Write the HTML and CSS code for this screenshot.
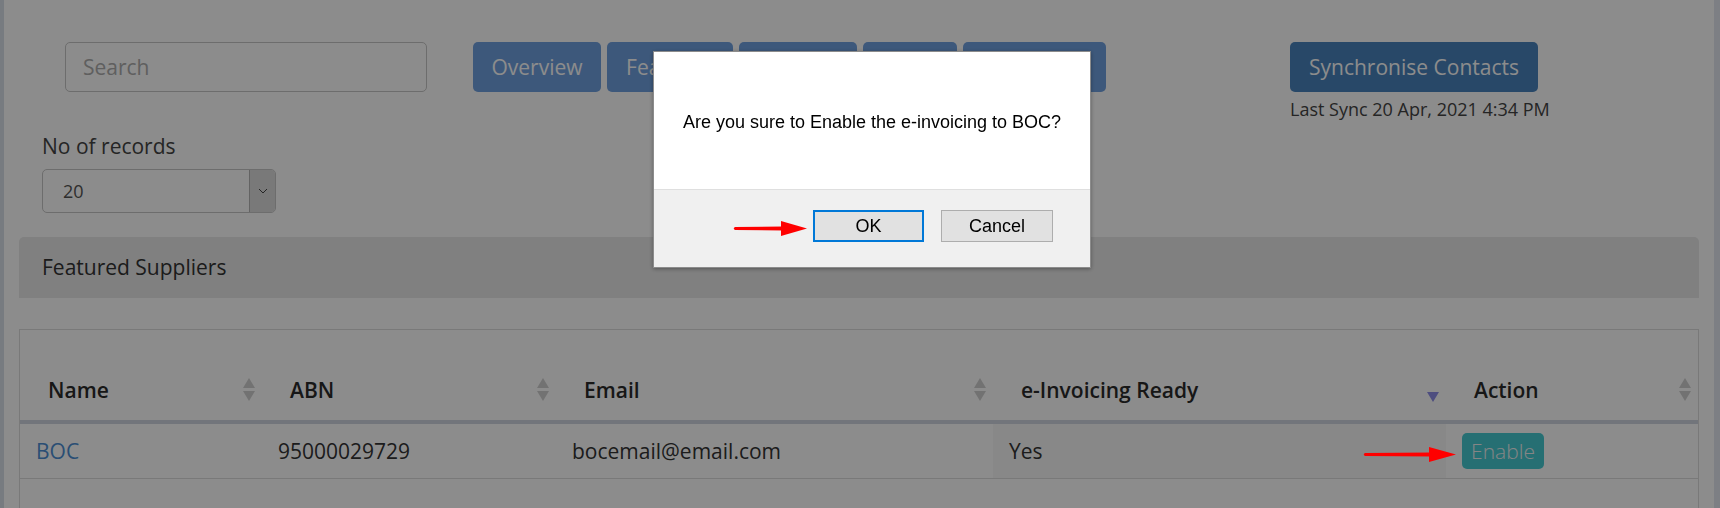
FILE: index.html
```html
<!DOCTYPE html>
<html lang="en">
<head>
<meta charset="utf-8">
<title>Suppliers</title>
<link rel="stylesheet" href="styles.css">
</head>
<body>
<div class="app">
  <div class="edge-left"></div>
  <main class="main">
    <div class="toolbar">
      <input class="search" type="text" placeholder="Search">
      <div class="tabs">
        <button class="tab tab-1">Overview</button>
        <button class="tab tab-2">Featured</button>
        <button class="tab tab-3">Connected</button>
        <button class="tab tab-4">Others</button>
        <button class="tab tab-5">Pending</button>
      </div>
      <div class="sync">
        <button class="sync-btn">Synchronise Contacts</button>
        <div class="last-sync">Last Sync 20 Apr, 2021 4:34 PM</div>
      </div>
    </div>

    <div class="records">
      <div class="records-label">No of records</div>
      <div class="select">
        <span class="select-value">20</span>
        <span class="select-arrow">
          <svg width="10" height="6" viewBox="0 0 10 6"><polyline points="1,1 5,5 9,1" fill="none" stroke="#444" stroke-width="1"/></svg>
        </span>
      </div>
    </div>

    <div class="panel">Featured Suppliers</div>

    <div class="table-box">
      <table class="grid">
        <colgroup>
          <col class="c1"><col class="c2"><col class="c3"><col class="c4"><col>
        </colgroup>
        <thead>
          <tr>
            <th><div class="th-in"><span>Name</span><svg class="sort" width="12" height="24" viewBox="0 0 12 24"><polygon points="6,0 12,10 0,10" fill="#d0d0d0"/><polygon points="0,13 12,13 6,23" fill="#d0d0d0"/></svg></div></th>
            <th><div class="th-in"><span>ABN</span><svg class="sort" width="12" height="24" viewBox="0 0 12 24"><polygon points="6,0 12,10 0,10" fill="#d0d0d0"/><polygon points="0,13 12,13 6,23" fill="#d0d0d0"/></svg></div></th>
            <th><div class="th-in"><span>Email</span><svg class="sort" width="12" height="24" viewBox="0 0 12 24"><polygon points="6,0 12,10 0,10" fill="#d0d0d0"/><polygon points="0,13 12,13 6,23" fill="#d0d0d0"/></svg></div></th>
            <th><div class="th-in"><span>e-Invoicing Ready</span><svg class="sort" width="12" height="24" viewBox="0 0 12 24"><polygon points="0,14 12,14 6,24" fill="#8f8fe8"/></svg></div></th>
            <th><div class="th-in"><span>Action</span><svg class="sort" width="12" height="24" viewBox="0 0 12 24"><polygon points="6,0 12,10 0,10" fill="#d0d0d0"/><polygon points="0,13 12,13 6,23" fill="#d0d0d0"/></svg></div></th>
          </tr>
        </thead>
        <tbody>
          <tr>
            <td><a class="link" href="#">BOC</a></td>
            <td>95000029729</td>
            <td>bocemail@email.com</td>
            <td class="sorted">Yes</td>
            <td class="action-cell"><span class="enable-btn">Enable</span></td>
          </tr>
        </tbody>
      </table>
    </div>
  </main>
  <div class="edge-right"></div>
</div>

<div class="overlay"></div>

<div class="dialog">
  <div class="dialog-body">Are you sure to Enable the e-invoicing to BOC?</div>
  <div class="dialog-footer">
    <button class="dbtn dbtn-ok">OK</button>
    <button class="dbtn dbtn-cancel">Cancel</button>
  </div>
</div>

<svg class="arrow arrow-ok" width="78" height="20" viewBox="0 0 78 20">
  <path d="M4,8 L52,7.5 L52,11.5 L4,11 Q1.5,9.5 4,8 Z" fill="#f00"/>
  <polygon points="50,2 76,9.5 50,17" fill="#f00"/>
</svg>
<svg class="arrow arrow-enable" width="98" height="20" viewBox="0 0 98 20">
  <path d="M4,8 L70,7.5 L70,11.5 L4,11 Q1.5,9.5 4,8 Z" fill="#f00"/>
  <polygon points="68,2 95,9.5 68,17" fill="#f00"/>
</svg>
</body>
</html>
```

FILE: styles.css
```css
* { box-sizing: border-box; }
html, body { margin: 0; padding: 0; }
body {
  width: 1720px;
  height: 508px;
  overflow: hidden;
  background: #fff;
  color: #333;
  font-family: "Open Sans", "Liberation Sans", sans-serif;
}
.app { display: flex; height: 508px; overflow: hidden; }
.edge-left { flex: none; width: 4px; background: #d9e0ea; }
.edge-right { flex: none; width: 6px; background: #e3e8f0; }
.main { flex: 1; padding: 42px 15px 0 15px; min-width: 0; }

/* toolbar */
.toolbar { display: flex; align-items: flex-start; padding-left: 46px; }
.search {
  width: 362px; height: 50px;
  border: 1px solid #c6c6c6; border-radius: 5px;
  padding: 0 17px;
  font-family: "Open Sans", sans-serif; font-size: 21px; color: #555;
  background: #fff; outline: none;
}
.search::placeholder { color: #adadad; }
.tabs { display: flex; gap: 6px; margin-left: 46px; }
.tab {
  height: 50px; padding: 0; border: 0; border-radius: 5px;
  background: #70a1e0; color: #fff;
  font-family: "Open Sans", sans-serif; font-size: 21px; line-height: 50px;
  text-align: center; white-space: nowrap; overflow: hidden;
}
.tab-1 { width: 128px; }
.tab-2 { width: 126px; }
.tab-3 { width: 118px; }
.tab-4 { width: 94px; }
.tab-5 { width: 143px; }
.sync { display: flex; flex-direction: column; margin-left: 184px; }
.sync-btn {
  width: 248px; height: 50px; padding: 0; border: 0; border-radius: 5px;
  background: #4983be; color: #fff;
  font-family: "Open Sans", sans-serif; font-size: 21px; line-height: 50px;
}
.last-sync { margin-top: 6px; font-size: 18px; line-height: 22px; color: #444; white-space: nowrap; }

/* records */
.records { margin-top: 13px; padding-left: 23px; }
.records-label { font-size: 21px; line-height: 26px; color: #444; }
.select {
  margin-top: 10px; width: 234px; height: 44px;
  border: 1px solid #c6c6c6; border-radius: 5px;
  display: flex; overflow: hidden; background: #fff;
}
.select-value { flex: 1; padding-left: 20px; font-size: 18px; line-height: 42px; color: #555; }
.select-arrow {
  width: 26px; background: #dcdcdc; border-left: 1px solid #b5b5b5;
  display: flex; align-items: center; justify-content: center;
}

/* panel */
.panel {
  margin-top: 24px; height: 61px; padding-left: 23px;
  background: #e9e9e9; border-radius: 5px 5px 0 0;
  font-size: 21px; line-height: 61px; color: #333;
}

/* table */
.table-box {
  margin-top: 31px; height: 179px;
  border: 1px solid #dcdcdc; border-bottom: 0; padding-top: 30px;
}
.grid { width: 100%; table-layout: fixed; border-collapse: separate; border-spacing: 0; }
.c1 { width: 242px; }
.c2 { width: 294px; }
.c3 { width: 437px; }
.c4 { width: 453px; }
.grid th {
  padding: 17px 7px 17px 28px;
  border-bottom: 4px solid #cfd6e0;
  font-size: 21px; font-weight: 600; line-height: 26px; color: #2b2b2b;
  text-align: left;
}
.th-in { display: flex; align-items: center; justify-content: space-between; }
.sort { flex: none; display: block; }
.grid td {
  padding: 14px 16px;
  border-bottom: 1px solid #dcdcdc;
  font-size: 21px; line-height: 26px; color: #333;
  white-space: nowrap;
}
.grid td.sorted { background: #f7f7f7; }
.grid td.action-cell { padding-top: 9px; padding-bottom: 9px; }
.link { color: #4d8fd4; text-decoration: none; }
.enable-btn {
  display: block; width: 82px; height: 36px;
  background: #46cbd2; color: #f2f2f2; border-radius: 5px;
  font-size: 21px; font-weight: 300; line-height: 36px; text-align: center;
}

/* overlay + dialog */
.overlay { position: fixed; left: 0; top: 0; width: 1720px; height: 508px; background: rgba(0, 0, 0, 0.45); }
.dialog {
  position: fixed; left: 653px; top: 51px; width: 438px;
  background: #fff; border: 1px solid #8c8c8c;
  box-shadow: 0 1px 4px rgba(0, 0, 0, 0.35);
  font-family: "Liberation Sans", Arial, sans-serif; color: #000;
}
.dialog-body { height: 137px; padding-top: 59px; text-align: center; font-size: 18px; line-height: 22px; }
.dialog-footer {
  height: 78px; padding: 20px 37px 0 0;
  background: #f0f0f0; border-top: 1px solid #dfdfdf;
  display: flex; justify-content: flex-end; align-items: flex-start; gap: 17px;
}
.dbtn {
  height: 32px; padding: 0; background: #e1e1e1; color: #000;
  font-family: "Liberation Sans", Arial, sans-serif; font-size: 18px;
}
.dbtn-ok { width: 111px; border: 2px solid #0078d7; }
.dbtn-cancel { width: 112px; border: 1px solid #adadad; }

.arrow { position: fixed; display: block; }
.arrow-ok { left: 731px; top: 219px; }
.arrow-enable { left: 1361px; top: 445px; }
```
